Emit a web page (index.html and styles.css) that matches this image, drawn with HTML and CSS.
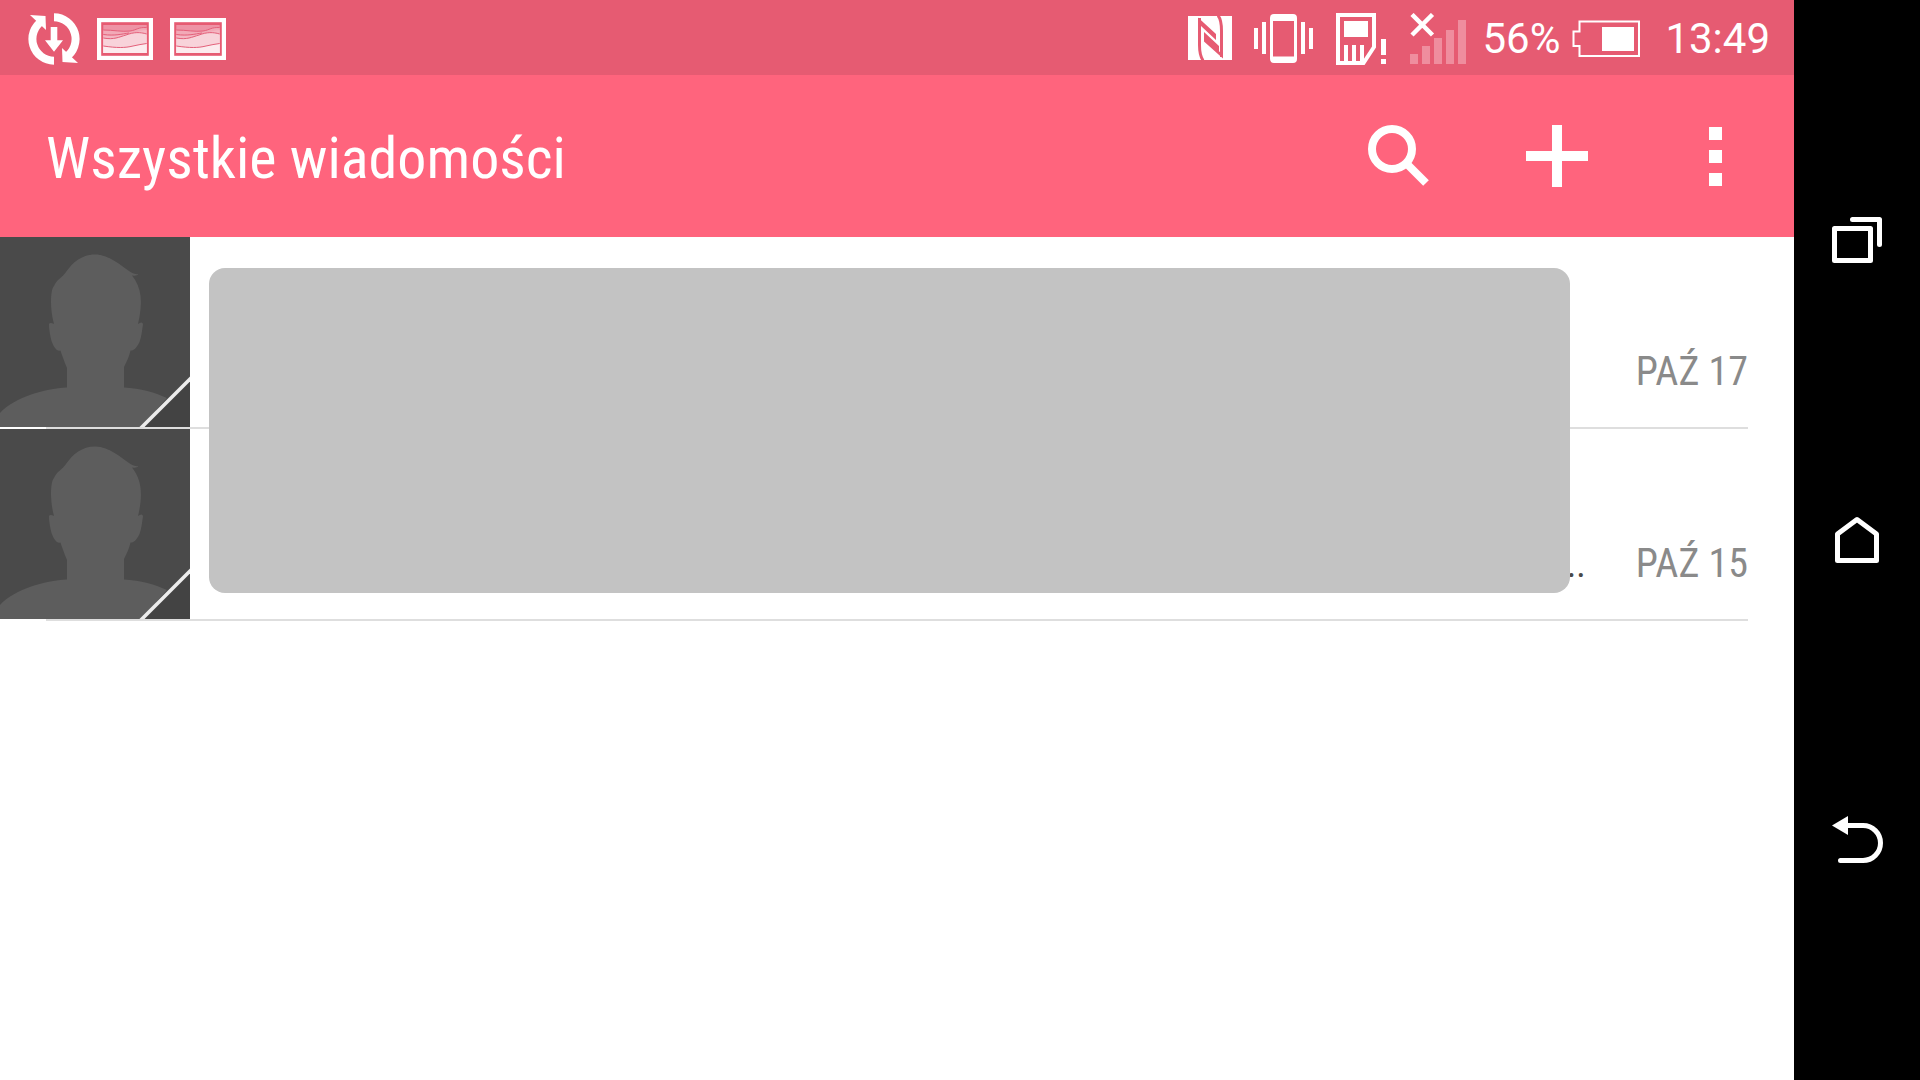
FILE: index.html
```html
<!DOCTYPE html>
<html lang="pl">
<head>
<meta charset="utf-8">
<meta name="viewport" content="width=device-width, initial-scale=1">
<title>Wszystkie wiadomości</title>
<link rel="stylesheet" href="styles.css">
</head>
<body>
<svg class="defs" width="0" height="0" aria-hidden="true">
  <symbol id="photo" viewBox="0 0 56 42">
    <rect x="2" y="2" width="52" height="38" fill="none" stroke="#fff" stroke-width="4.4"/>
    <rect x="6.3" y="7" width="43.4" height="28" fill="#ee93a5"/>
    <path d="M6.3 12C16 12 25 14 33 13C40 12 41 9 49.7 9.600V35H6.300Z" fill="#f2a9b7"/>
    <path d="M6.300 17C18 19 25 16 32 15.500C40 15 43 12 49.700 12V35H6.300Z" fill="#f4b6c2"/>
    <path d="M6.300 20C17 22 22 19 29 17C37 14 43 14 49.700 16V35H6.300Z" fill="#f8d3da"/>
    <path d="M6.300 28C20 30 28 30 36 28C41 27 45 26 49.700 25.500V35H6.300Z" fill="#fcebee"/>
    <path d="M6.300 12C16 12 25 14 33 13C40 12 41 9 49.700 9.600M6.300 16.500C18 18 25 16 32 15M6.300 20C17 22 22 19 29 17C37 14 43 14 49.700 16M6.300 28C20 30 28 30 36 28C41 27 45 26 49.700 25.500" fill="none" stroke="#e4607a" stroke-width="1"/>
  </symbol>
  <symbol id="person" viewBox="0 0 190 190">
    <rect width="190" height="190" fill="#4a4a4a"/>
    <path d="M0 176C15 160 44 152 67 150.500V131C64 124 62 118 60.500 113.500C56 115 53 108 51.500 104C50 98 49 92 49 87Q50 85 54 87C50 73 50 53 54 49C57 42 62 41 66 35C73 25 82 17.500 95 17.500C110 17.500 121 29 129 34C133 37 136 37 138.500 37.500Q137 39 132 38.500C142 51 143 66 138 87Q142 84 143 87C142 94 141.500 99 139.500 105C136 112 133 114 130.500 113.500C129 120 127 124 124 130V150.500C140 151 156 156 167 161L141 190H0Z" fill="#5d5d5d"/>
    <path d="M190 142V190H142Z" fill="#434343"/>
    <path d="M140 192L192 140" stroke="#ececec" stroke-width="3.600"/>
  </symbol>
</svg>
<div class="device">
  <main class="screen">
    <header class="status">
      <div class="notifications">
        <svg width="52" height="52" viewBox="0 0 52 52" aria-hidden="true">
          <g id="half"><path d="M26 47.700A21.700 21.700 0 0 1 14 8" fill="none" stroke="#fff" stroke-width="8"/><path d="M2 2L17.500 3L18 17Z" fill="#fff"/></g>
          <use href="#half" transform="rotate(180 26 26)"/>
          <path d="M22.700 14H29.300V27.300H35L26 38.700L17 27.300H22.700Z" fill="#fff"/>
        </svg>
        <svg width="56" height="42" aria-hidden="true"><use href="#photo"/></svg>
        <svg width="56" height="42" aria-hidden="true"><use href="#photo"/></svg>
      </div>
      <div class="system">
        <svg width="44" height="48" viewBox="0 0 44 48" aria-hidden="true">
          <path d="M0 1H44V45H0Z" fill="#fff"/>
          <path d="M11.500 3V30C11.500 37 12 41 15 45.500M30 0.500C33 4 33.500 10 33.500 16V42" fill="none" stroke="#e65b72" stroke-width="3"/>
          <path d="M10 2.500L28 19V25L13 11ZM16 17L31 31V36.500L35 38V43.500L16 26.500Z" fill="#e65b72"/>
        </svg>
        <svg width="60" height="52" viewBox="0 0 60 52" aria-hidden="true">
          <path fill="#fff" fill-rule="evenodd" d="M20 1H39Q43 1 43 5V46Q43 50 39 50H20Q16 50 16 46V5Q16 1 20 1ZM19 8V43.500H40V8ZM0 15H4V36H0ZM8 9H12V41H8ZM47 9H51V41H47ZM55 15H59V36H55Z"/>
        </svg>
        <svg width="52" height="52" viewBox="0 0 52 52" aria-hidden="true">
          <path d="M2 2H38V34L27.500 50H2Z" fill="none" stroke="#fff" stroke-width="4"/>
          <path d="M8 8H32V24H8ZM8 32H12V50H8ZM16 32H20V50H16ZM24 32H28V48L24 50ZM45 26H50V42H45ZM45 46H50V51H45Z" fill="#fff"/>
        </svg>
        <svg width="56" height="52" viewBox="0 0 56 52" aria-hidden="true">
          <path d="M0 41H8V51H0ZM12 33H20V51H12ZM24 25H32V51H24ZM36 17H44V51H36ZM48 7H56V51H48Z" fill="#ef8d9e"/>
          <path d="M2 1.500L22.500 22M22.500 1.500L2 22" stroke="#fff" stroke-width="4.500"/>
        </svg>
        <span class="percent">56%</span>
        <svg width="68" height="38" viewBox="0 0 68 38" aria-hidden="true">
          <path d="M7.500 1.500H67V36H7.500V26H1.500V11.500H7.500Z" fill="none" stroke="#fff" stroke-width="2"/>
          <path d="M30 7H62V31H30Z" fill="#fff"/>
        </svg>
        <time class="clock">13:49</time>
      </div>
    </header>
    <div class="appbar">
      <h1>Wszystkie wiadomości</h1>
      <button type="button" aria-label="Szukaj"><svg width="64" height="64" viewBox="0 0 64 64"><circle cx="25" cy="25" r="20" fill="none" stroke="#fff" stroke-width="8"/><path d="M39 39L59 59" stroke="#fff" stroke-width="8"/></svg></button>
      <button type="button" aria-label="Nowa wiadomość"><svg width="64" height="64" viewBox="0 0 64 64"><path d="M32 1V63M1 32H63" stroke="#fff" stroke-width="10"/></svg></button>
      <button type="button" aria-label="Więcej opcji"><svg width="64" height="64" viewBox="0 0 64 64"><path d="M26 3H39V16H26ZM26 26H39V39H26ZM26 49H39V62H26Z" fill="#fff"/></svg></button>
    </div>
    <div class="messages">
      <ul>
        <li>
          <svg class="avatar" aria-hidden="true"><use href="#person"/></svg>
          <time>PAŹ 17</time>
        </li>
        <li>
          <svg class="avatar" aria-hidden="true"><use href="#person"/></svg>
          <span class="snippet">...</span>
          <time>PAŹ 15</time>
        </li>
      </ul>
      <div class="cover"></div>
    </div>
  </main>
  <nav class="keys">
    <button type="button" aria-label="Ostatnie"><svg width="60" height="60" viewBox="0 0 60 60"><path d="M7.500 18.500H43.500V50.500H7.500ZM25.500 9.500H52.500V34.500"/></svg></button>
    <button type="button" aria-label="Ekran główny"><svg width="60" height="60" viewBox="0 0 60 60"><path d="M10.500 50.500V24L30 9.500L49.500 24V50.500Z"/></svg></button>
    <button type="button" aria-label="Wstecz"><svg width="60" height="60" viewBox="0 0 60 60"><path d="M20 15.500H36A17.500 17.500 0 0 1 36 50.500H13.500"/><path class="head" d="M5 15.500L21 6V25Z"/></svg></button>
  </nav>
</div>
</body>
</html>
```
FILE: styles.css
```css
* {
  box-sizing: border-box;
}

body {
  margin: 0;
  background: #fff;
  font-family: Roboto, sans-serif;
}

svg {
  display: block;
  flex: none;
}

.defs {
  position: absolute;
}

.device {
  display: flex;
  min-height: 100vh;
}

.screen {
  flex: 1;
  min-width: 0;
}

.status {
  display: flex;
  justify-content: space-between;
  height: 75px;
  padding: 2px 24px 0 28px;
  background: #e65b72;
  color: #fff;
  font-size: 42px;
}

.notifications,
.system {
  display: flex;
  align-items: center;
}

.notifications {
  gap: 17px;
}

.system {
  gap: 22px;
}

.percent {
  margin: 0 -10px 0 -6px;
}

.clock {
  margin-left: 3px;
}

.appbar {
  display: flex;
  height: 162px;
  background: #ff647d;
  color: #fff;
}

.appbar h1 {
  flex: 1;
  align-self: center;
  margin: 0;
  padding: 4px 0 0 46px;
  font-family: "Roboto Condensed", Roboto, sans-serif;
  font-size: 58px;
  font-weight: 400;
  line-height: 72px;
}

button {
  display: flex;
  align-items: center;
  justify-content: center;
  padding: 0;
  border: 0;
  background: none;
}

.appbar button {
  width: 158px;
}

.messages {
  position: relative;
}

.messages ul {
  margin: 0;
  padding: 0;
  list-style: none;
}

.messages li {
  display: flex;
  align-items: flex-end;
  justify-content: flex-end;
  height: 192px;
  padding-right: 46px;
  padding-bottom: 2px;
  background: linear-gradient(#dedede, #dedede) 46px 100% / calc(100% - 92px) 2px no-repeat;
  font-family: "Roboto Condensed", Roboto, sans-serif;
  font-size: 40px;
  line-height: 48px;
}

.messages time {
  padding-bottom: 31px;
  color: #8a8a8a;
}

.avatar {
  width: 190px;
  height: 190px;
  margin-right: auto;
}

.snippet {
  padding: 0 50px 30px 0;
  color: #4a4a4a;
  font-size: 36px;
}

.cover {
  position: absolute;
  top: 31px;
  right: 224px;
  left: 209px;
  height: 325px;
  border-radius: 16px;
  background: #c3c3c3;
}

.keys {
  display: flex;
  flex-direction: column;
  width: 126px;
  padding: 90px 0;
  background: #000;
}

.keys button {
  flex: 1;
}

.keys path {
  fill: none;
  stroke: #fff;
  stroke-width: 5;
  stroke-linecap: round;
  stroke-linejoin: round;
}

.keys .head {
  fill: #fff;
  stroke: none;
}
```
